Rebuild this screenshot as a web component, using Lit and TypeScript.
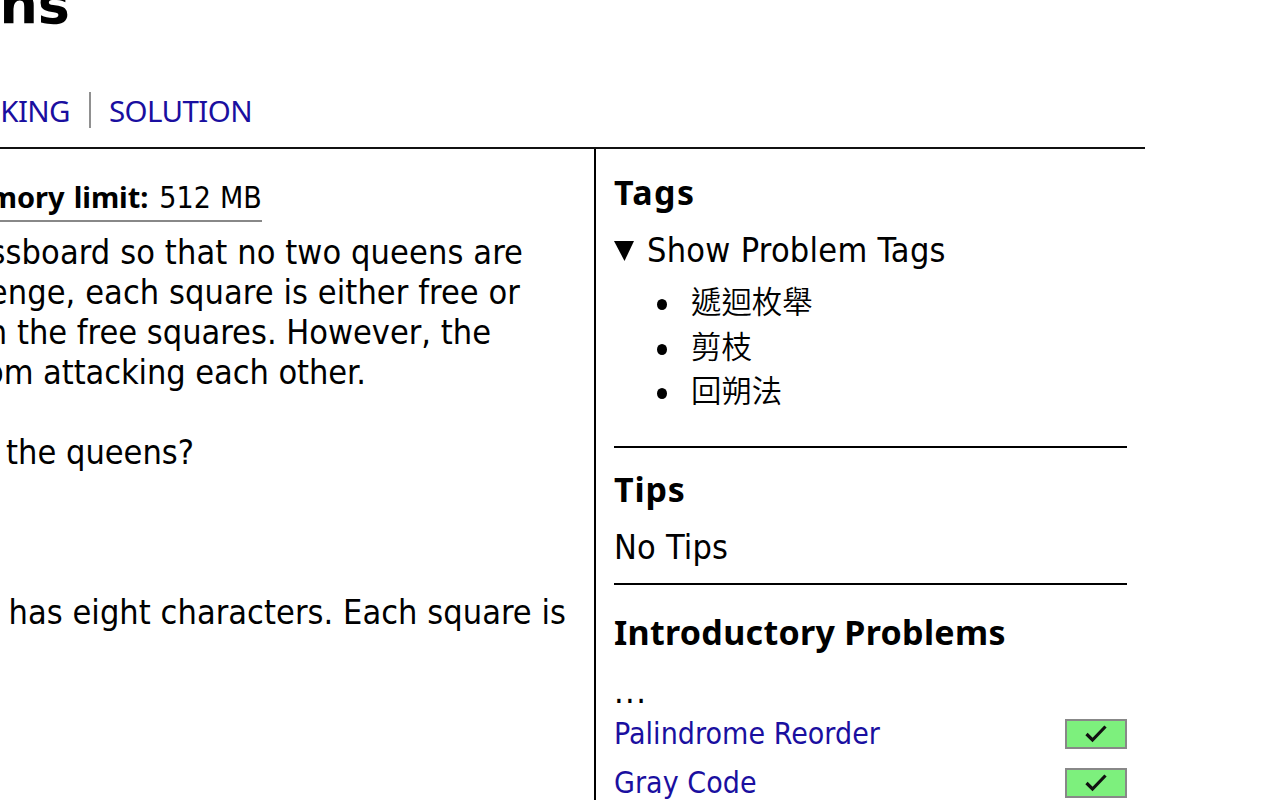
import { LitElement, html, css } from "lit";

const statement = [
  { text: "ssboard so that no two queens are", end: 523, spacing: 0.1 },
  { text: "enge, each square is either free or", end: 520, spacing: 0.08 },
  { text: "n the free squares. However, the", end: 491, spacing: 0 },
  { text: "om attacking each other.", end: 366, spacing: -0.08 },
  { text: "", end: 0, spacing: 0 },
  { text: "the queens?", end: 194, spacing: 0 },
  { text: "", end: 0, spacing: 0 },
  { text: "", end: 0, spacing: 0 },
  { text: "", end: 0, spacing: 0 },
  { text: "has eight characters. Each square is", end: 566, spacing: 0.05 },
];

class AppRoot extends LitElement {
  static styles = css`
    :host { display: block; width: 1280px; height: 800px; overflow: hidden; background: #fff; color: #000;
      font: 34px/40px "DejaVu Sans Condensed", "DejaVu Sans", sans-serif; white-space: nowrap; }
    * { box-sizing: border-box; }
    h1, h3, p, ul { margin: 0; padding: 0; }
    a { color: #1a0fa0; text-decoration: none; }
    header { width: 1145px; height: 149px; border-bottom: 2px solid #111; }
    h1 { width: 70px; height: 92px; display: flex; justify-content: flex-end; font: 700 54px/60px "DejaVu Sans", sans-serif; }
    h1 span { margin-top: -25px; }
    nav { display: flex; height: 36px; line-height: 38px; font-family: "Noto Sans", sans-serif; font-size: 29.5px; letter-spacing: -0.6px; }
    nav a:first-child { width: 91px; padding-right: 19px; border-right: 2px solid #909090; display: flex; justify-content: flex-end; }
    nav a + a { padding-left: 18px; }
    .body { display: flex; height: 651px; }
    main { width: 594px; }
    .limits { width: 262px; height: 73px; padding-top: 29px; border-bottom: 2px solid #888; display: flex; justify-content: flex-end; font-size: 30px; letter-spacing: 0.15px; }
    .limits b { font: 700 29px/38px "Noto Sans", sans-serif; margin-right: 11px; letter-spacing: -0.1px; word-spacing: 2px; }
    .lines { padding-top: 10px; }
    .line { height: 40px; display: flex; justify-content: flex-end; }
    aside { width: 533px; border-left: 2px solid #000; padding: 23px 0 0 18px; }
    h3 { font: 700 34px/40px "Noto Sans", sans-serif; letter-spacing: 0.3px; }
    section { width: 513px; border-bottom: 2px solid #000; }
    .tags { height: 276px; }
    .tags h3 { letter-spacing: 1.4px; }
    .tips { height: 137px; padding-top: 21px; }
    .tips h3 { letter-spacing: 0.8px; }
    .list { border: 0; padding-top: 27px; }
    .summary { display: flex; align-items: center; margin-top: 18px; height: 40px; letter-spacing: 0.28px; }
    .summary svg { margin-right: 12px; }
    ul { list-style: none; margin-top: 8px; }
    li { display: flex; align-items: center; height: 44.4px; padding-left: 43px; font: 350 30.4px/44px "Noto Sans CJK TC", sans-serif; }
    li i { width: 10px; height: 11px; border-radius: 50%; background: #000; margin: 9px 24px 0 0; }
    .tips p { margin-top: 18px; letter-spacing: 0.2px; }
    .dots { margin-top: 19px; height: 39px; font-size: 34px; letter-spacing: 1.4px; }
    .row { display: flex; justify-content: space-between; align-items: center; height: 48.5px; font-size: 30px; letter-spacing: 0.05px; }
    .badge { width: 62px; height: 30px; border: 2px solid #888; background: #7df07d; display: flex; justify-content: center; align-items: center; }
  `;
  render() {
    return html`
      <header>
        <h1><span>ns</span></h1>
        <nav><a>KING</a><a>SOLUTION</a></nav>
      </header>
      <div class="body">
        <main>
          <div class="limits"><b>mory limit:</b>512 MB</div>
          <div class="lines">${statement.map(l => html`<div class="line" style="width:${l.end}px;letter-spacing:${l.spacing}px">${l.text}</div>`)}</div>
        </main>
        <aside>
          <section class="tags">
            <h3>Tags</h3>
            <div class="summary"><svg width="21" height="21" viewBox="0 0 21 21"><path d="M0 1H20L10.5 21Z" /></svg>Show Problem Tags</div>
            <ul>${["遞迴枚舉", "剪枝", "回朔法"].map(t => html`<li><i></i>${t}</li>`)}</ul>
          </section>
          <section class="tips"><h3>Tips</h3><p>No Tips</p></section>
          <section class="list">
            <h3>Introductory Problems</h3>
            <div class="dots">...</div>
            ${["Palindrome Reorder", "Gray Code"].map(t => html`<div class="row"><a>${t}</a><span class="badge"><svg width="22" height="18" viewBox="0 0 22 18"><path d="M1.5 9L7.5 15L20.5 1.5" fill="none" stroke="#111" stroke-width="3.2" /></svg></span></div>`)}
          </section>
        </aside>
      </div>`;
  }
}
customElements.define("app-root", AppRoot);
